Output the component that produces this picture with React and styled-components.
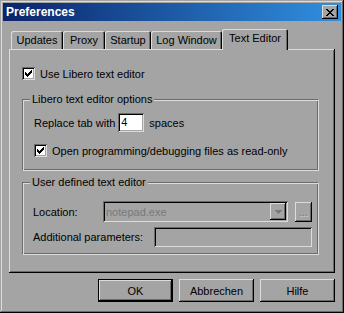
import React from "react";
import styled, { createGlobalStyle, css } from "styled-components";

// classic 3d palette, a bit darker than stock
const face = "#a4a4a4";
const light = "#dcdcdc";
const shadow = "#6b6b6b";
const dark = "#000";
const greyText = "#7a7a7a";

const Global = createGlobalStyle`
  html, body { margin: 0; padding: 0; background: ${face}; }
  body {
    font-family: "Liberation Sans", Arial, sans-serif;
    font-size: 11px;
    color: #000;
  }
`;

const raised = css`
  box-shadow: inset -1px -1px ${dark}, inset 1px 1px ${light},
    inset -2px -2px ${shadow};
`;

const sunken = css`
  box-shadow: inset 1px 1px ${shadow}, inset -1px -1px ${light},
    inset 2px 2px ${dark}, inset -2px -2px ${face};
`;

const Window = styled.div`
  width: 344px;
  height: 313px;
  box-sizing: border-box;
  padding: 3px;
  background: ${face};
  box-shadow: inset -1px -1px ${dark}, inset 1px 1px ${face},
    inset -2px -2px ${shadow}, inset 2px 2px ${light};
  display: flex;
  flex-direction: column;
`;

const TitleBar = styled.div`
  height: 18px;
  display: flex;
  align-items: center;
  justify-content: space-between;
  padding: 0 3px 0 3px;
  background: linear-gradient(to right, #0a246a, #3090e0);
`;

const Title = styled.span`
  color: #fff;
  font-weight: bold;
  font-size: 12px;
`;

const CloseButton = styled.div`
  width: 16px;
  height: 14px;
  background: ${face};
  ${raised};
  display: flex;
  align-items: center;
  justify-content: center;
  padding-right: 1px;
  box-sizing: border-box;
`;

const Body = styled.div`
  flex: 1;
  display: flex;
  flex-direction: column;
  padding: 8px 6px 0 6px;
`;

const TabStrip = styled.div`
  height: 20px;
  display: flex;
  align-items: flex-end;
  padding-left: 2px;
`;

const Tab = styled.div`
  width: ${(p) => p.$w}px;
  height: ${(p) => (p.$active ? 21 : 18)}px;
  box-sizing: border-box;
  display: flex;
  justify-content: center;
  align-items: center;
  padding-bottom: ${(p) => (p.$active ? 3 : 1)}px;
  border-radius: 2px 2px 0 0;
  background: ${face};
  box-shadow: inset 1px 1px ${light}, inset -1px 0 ${dark},
    inset -2px 0 ${shadow};
  position: relative;
  z-index: ${(p) => (p.$active ? 1 : 0)};
  margin-bottom: ${(p) => (p.$active ? -1 : 0)}px;
`;

const Panel = styled.div`
  height: 224px;
  box-sizing: border-box;
  ${raised};
  padding: 18px 16px 0 13px;
  display: flex;
  flex-direction: column;
`;

const CheckRow = styled.label`
  display: flex;
  align-items: center;
  gap: 5px;
  height: 13px;
  margin-top: ${(p) => p.$mt || 0}px;
`;

const CheckBox = styled.span`
  width: 13px;
  height: 13px;
  box-sizing: border-box;
  background: #fff;
  ${sunken};
  display: flex;
  align-items: center;
  justify-content: center;
  flex: none;
`;

const Group = styled.fieldset`
  margin: ${(p) => p.$mt}px 0 0;
  padding: 0;
  min-width: 0;
  border: 1px solid;
  border-color: ${shadow} ${light} ${light} ${shadow};
  box-shadow: inset 1px 1px ${light}, inset -1px -1px ${shadow};
`;

const Legend = styled.legend`
  margin-left: 7px;
  padding: 0 2px;
  line-height: 13px;
  background: ${face};
`;

const GroupBody = styled.div`
  display: flex;
  flex-direction: column;
  padding: ${(p) => p.$pad};
`;

const Row = styled.div`
  display: flex;
  align-items: center;
  margin-top: ${(p) => p.$mt || 0}px;
`;

const FieldLabel = styled.span`
  width: ${(p) => p.$w}px;
  flex: none;
`;

const NumberBox = styled.div`
  width: 26px;
  height: 19px;
  box-sizing: border-box;
  background: #fff;
  ${sunken};
  padding: 3px 0 0 3px;
  margin: 0 5px 0 3px;
`;

const Combo = styled.div`
  width: 185px;
  height: 21px;
  box-sizing: border-box;
  ${sunken};
  padding: 2px;
  display: flex;
  align-items: center;
  color: ${greyText};
`;

const ComboText = styled.span`
  flex: 1;
  padding-left: 1px;
`;

const ComboButton = styled.div`
  width: 16px;
  height: 17px;
  box-sizing: border-box;
  ${raised};
  display: flex;
  align-items: center;
  justify-content: center;
`;

const SmallButton = styled.div`
  width: 17px;
  height: 20px;
  box-sizing: border-box;
  margin-left: 7px;
  ${raised};
  color: ${greyText};
  text-shadow: 1px 1px ${light};
  font-size: 11px;
  line-height: 11px;
  display: flex;
  align-items: center;
  justify-content: center;
  padding: 1px 1px 0 0;
`;

const TextBox = styled.div`
  width: ${(p) => p.$w}px;
  height: 20px;
  box-sizing: border-box;
  ${sunken};
`;

const ButtonRow = styled.div`
  display: flex;
  justify-content: flex-end;
  gap: 6px;
  margin-top: 6px;
`;

const Button = styled.div`
  width: 75px;
  height: 23px;
  box-sizing: border-box;
  display: flex;
  align-items: center;
  justify-content: center;
  ${(p) =>
    p.$default
      ? css`
          border: 1px solid ${dark};
          ${raised};
        `
      : raised};
`;

const Check = () => (
  <svg width="7" height="7" viewBox="0 0 7 7" shapeRendering="crispEdges">
    <path
      d="M0 2h1v3H0z M1 3h1v3H1z M2 4h1v3H2z M3 3h1v3H3z M4 2h1v3H4z M5 1h1v3H5z M6 0h1v3H6z"
      fill="#000"
    />
  </svg>
);

const CloseGlyph = () => (
  <svg width="8" height="7" viewBox="0 0 8 7" shapeRendering="crispEdges">
    <path
      d="M0 0h2v1H0z M6 0h2v1H6z M1 1h2v1H1z M5 1h2v1H5z M2 2h4v1H2z M3 3h2v1H3z M2 4h4v1H2z M1 5h2v1H1z M5 5h2v1H5z M0 6h2v1H0z M6 6h2v1H6z"
      fill="#000"
    />
  </svg>
);

const DownArrow = () => (
  <svg width="7" height="4" viewBox="0 0 7 4" shapeRendering="crispEdges">
    <path d="M0 0h7L3.5 4z" fill={greyText} />
  </svg>
);

const tabs = [
  { label: "Updates", w: 52 },
  { label: "Proxy", w: 42 },
  { label: "Startup", w: 46 },
  { label: "Log Window", w: 71 },
  { label: "Text Editor", w: 66, active: true },
];

export default function App() {
  return (
    <>
      <Global />
      <Window>
        <TitleBar>
          <Title>Preferences</Title>
          <CloseButton>
            <CloseGlyph />
          </CloseButton>
        </TitleBar>
        <Body>
          <TabStrip>
            {tabs.map((t) => (
              <Tab key={t.label} $w={t.w} $active={t.active}>
                {t.label}
              </Tab>
            ))}
          </TabStrip>
          <Panel>
            <CheckRow>
              <CheckBox>
                <Check />
              </CheckBox>
              Use Libero text editor
            </CheckRow>

            <Group $mt={13}>
              <Legend>Libero text editor options</Legend>
              <GroupBody $pad="7px 0 13px 11px">
                <Row>
                  Replace tab with
                  <NumberBox>4</NumberBox>
                  spaces
                </Row>
                <CheckRow $mt={12}>
                  <CheckBox>
                    <Check />
                  </CheckBox>
                  Open programming/debugging files as read-only
                </CheckRow>
              </GroupBody>
            </Group>

            <Group $mt={5}>
              <Legend>User defined text editor</Legend>
              <GroupBody $pad="12px 0 7px 10px">
                <Row>
                  <FieldLabel $w={70}>Location:</FieldLabel>
                  <Combo>
                    <ComboText>notepad.exe</ComboText>
                    <ComboButton>
                      <DownArrow />
                    </ComboButton>
                  </Combo>
                  <SmallButton>...</SmallButton>
                </Row>
                <Row $mt={5}>
                  <FieldLabel $w={121}>Additional parameters:</FieldLabel>
                  <TextBox $w={158} />
                </Row>
              </GroupBody>
            </Group>
          </Panel>
          <ButtonRow>
            <Button $default>OK</Button>
            <Button>Abbrechen</Button>
            <Button>Hilfe</Button>
          </ButtonRow>
        </Body>
      </Window>
    </>
  );
}
